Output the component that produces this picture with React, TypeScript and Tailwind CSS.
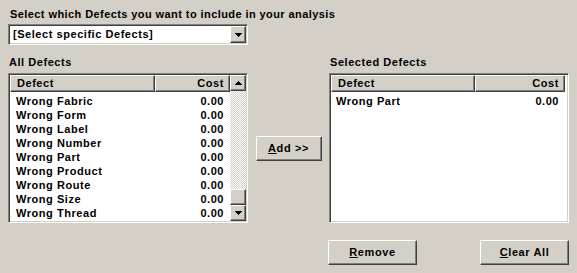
import React from "react";

const font = { fontFamily: '"Liberation Sans", Arial, sans-serif' };

function ArrowDown() {
  return (
    <svg width="7" height="4" viewBox="0 0 7 4" shapeRendering="crispEdges">
      <path d="M0 0h7v1H0zM1 1h5v1H1zM2 2h3v1H2zM3 3h1v1H3z" fill="#000" />
    </svg>
  );
}
function ArrowUp() {
  return (
    <svg width="7" height="4" viewBox="0 0 7 4" shapeRendering="crispEdges">
      <path d="M3 0h1v1H3zM2 1h3v1H2zM1 2h5v1H1zM0 3h7v1H0z" fill="#000" />
    </svg>
  );
}

const raised =
  "border border-t-white border-l-white border-b-[#404040] border-r-[#404040] shadow-[inset_-1px_-1px_#808080,inset_1px_1px_#d4d0c8] bg-[#d4d0c8]";
const sunken =
  "border border-t-[#808080] border-l-[#808080] border-b-white border-r-white shadow-[inset_1px_1px_#404040,inset_-1px_-1px_#d4d0c8]";

function Btn({ children, w }: { children: React.ReactNode; w: string }) {
  return (
    <div className={`${raised} ${w} h-[25px] flex items-center justify-center text-[11px] font-bold text-black`}>
      {children}
    </div>
  );
}

const allRows = [
  "Wrong Fabric",
  "Wrong Form",
  "Wrong Label",
  "Wrong Number",
  "Wrong Part",
  "Wrong Product",
  "Wrong Route",
  "Wrong Size",
  "Wrong Thread",
];

function Header({ defectW, costW }: { defectW: string; costW: string }) {
  return (
    <div className="flex h-[17px]">
      <div className={`${raised} ${defectW} h-[17px] flex items-center pl-[6px] text-[11px] font-bold tracking-[0.55px]`}>Defect</div>
      <div className={`${raised} ${costW} h-[17px] flex items-center justify-end pr-[5px] text-[11px] font-bold tracking-[0.55px]`}>Cost</div>
    </div>
  );
}

export default function App() {
  return (
    <div style={font} className="w-[577px] h-[273px] bg-[#d4d0c8] text-black pl-[8px] pt-[8px] overflow-hidden">
      <div className="text-[11px] font-bold leading-[13px] pl-[2px] tracking-[0.42px]">
        Select which Defects you want to include in your analysis
      </div>
      <div className={`${sunken} mt-[3px] w-[240px] h-[21px] bg-white flex items-stretch p-[1px]`}>
        <div className="flex-1 flex items-center pl-[3px] text-[11px] font-bold tracking-[0.55px]">[Select specific Defects]</div>
        <div className={`${raised} w-[16px] flex items-center justify-center`}>
          <ArrowDown />
        </div>
      </div>
      <div className="flex mt-[11px]">
        <div className="w-[240px] flex flex-col">
          <div className="text-[11px] font-bold leading-[13px] pl-[1px] tracking-[0.55px]">All Defects</div>
          <div className={`${sunken} mt-[4px] w-[240px] h-[150px] bg-white p-[1px] flex`}>
            <div className="flex-1 flex flex-col">
              <Header defectW="w-[145px]" costW="w-[75px]" />
              <div className="flex flex-col pt-[2px]">
                {allRows.map((r) => (
                  <div key={r} className="flex h-[14px] items-center text-[11px] font-bold tracking-[0.55px]">
                    <div className="w-[145px] pl-[6px]">{r}</div>
                    <div className="w-[75px] text-right pr-[6px]">0.00</div>
                  </div>
                ))}
              </div>
            </div>
            <div className="w-[16px] flex flex-col">
              <div className={`${raised} h-[16px] flex items-center justify-center`}>
                <ArrowUp />
              </div>
              <div className="flex-1 bg-[repeating-conic-gradient(#ffffff_0_25%,#d4d0c8_0_50%)] bg-[length:2px_2px]" />
              <div className={`${raised} h-[16px]`} />
              <div className={`${raised} h-[16px] flex items-center justify-center`}>
                <ArrowDown />
              </div>
            </div>
          </div>
        </div>
        <div className="w-[81px] flex items-start justify-center pt-[80px]">
          <Btn w="w-[66px]">
            <span className="tracking-[0.6px]"><span className="underline">A</span>dd &gt;&gt;</span>
          </Btn>
        </div>
        <div className="w-[240px] flex flex-col">
          <div className="text-[11px] font-bold leading-[13px] pl-[1px] tracking-[0.55px]">Selected Defects</div>
          <div className={`${sunken} mt-[4px] w-[240px] h-[150px] bg-white p-[1px] flex flex-col`}>
            <Header defectW="w-[144px]" costW="w-[90px]" />
            <div className="flex h-[14px] items-center text-[11px] font-bold tracking-[0.55px] mt-[2px]">
              <div className="w-[144px] pl-[5px]">Wrong Part</div>
              <div className="w-[90px] text-right pr-[6px]">0.00</div>
            </div>
          </div>
          <div className="flex justify-between mt-[17px] -ml-[1px]">
            <Btn w="w-[89px]">
              <span className="tracking-[0.6px]"><span className="underline">R</span>emove</span>
            </Btn>
            <Btn w="w-[89px]">
              <span className="tracking-[0.6px]"><span className="underline">C</span>lear All</span>
            </Btn>
          </div>
        </div>
      </div>
    </div>
  );
}
